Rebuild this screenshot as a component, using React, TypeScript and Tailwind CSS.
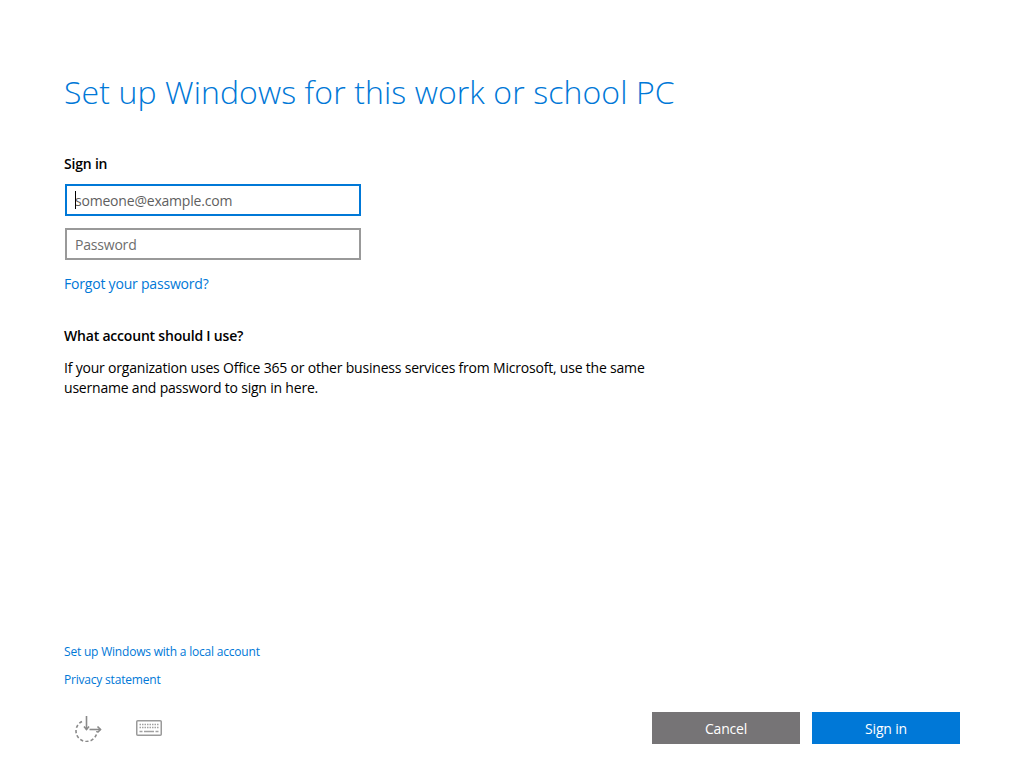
import React from "react"

function AccessIcon() {
  return (
    <svg width="28" height="28" viewBox="0 0 28 28" fill="none" stroke="#8a8a8a" strokeWidth="1.6">
      <path d="M8 7.5A10.5 10.5 0 1 0 23 17" strokeDasharray="3.2 2.2" />
      <path d="M12.5 2v13.5" />
      <path d="M10 12.5l2.5 3 2.5-3" />
      <path d="M15.5 15.5h11" />
      <path d="M23.5 12.5l3 3-3 3" />
    </svg>
  )
}

function KeyboardIcon() {
  return (
    <svg width="26" height="16" viewBox="0 0 26 16" fill="none">
      <rect x="0.75" y="0.75" width="24.5" height="14.5" rx="1" stroke="#9a9a9a" strokeWidth="1.5" />
      <path d="M3.5 4.5h19" stroke="#a0a0a0" strokeWidth="1.5" strokeDasharray="1.5 1" />
      <path d="M3.5 7.5h19" stroke="#a0a0a0" strokeWidth="1.5" strokeDasharray="1.5 1" />
      <path d="M3.5 11.5h3M8 11.5h10M19.5 11.5h3" stroke="#a0a0a0" strokeWidth="1.5" />
    </svg>
  )
}

export default function App() {
  return (
    <div className="w-[1024px] h-[768px] bg-white flex flex-col overflow-hidden font-['Open_Sans','Noto_Sans',sans-serif] text-black">
      <h1 className="ml-16 mt-[70px] h-[44px] text-[32px] leading-[44px] font-light tracking-[0.1px] text-[#0078d7] whitespace-nowrap">
        Set up Windows for this work or school PC
      </h1>

      <div className="ml-16 mt-[40px] w-[640px] flex flex-col">
        <div className="h-5 text-[14px] leading-5 font-semibold tracking-[-0.2px]">Sign in</div>

        <div className="mt-[10px] ml-px relative w-[296px] h-8 border-2 border-[#0078d7] px-[8px] flex items-center text-[14px] text-[#5f5f5f] tracking-[-0.2px]">
          someone@example.com
          <span className="absolute left-[8px] top-[5px] w-px h-[18px] bg-black"></span>
        </div>
        <div className="mt-3 ml-px w-[296px] h-8 border-2 border-[#999999] px-[8px] flex items-center text-[14px] text-[#6d6d6d] tracking-[-0.2px]">
          Password
        </div>

        <a className="mt-[14px] h-5 text-[14px] leading-5 text-[#0078d7] tracking-[-0.2px]">Forgot your password?</a>

        <div className="mt-[32px] h-5 text-[14px] leading-5 font-semibold tracking-[-0.2px]">What account should I use?</div>
        <p className="mt-3 w-[640px] text-[14px] leading-5 tracking-[-0.2px]">
          If your organization uses Office 365 or other business services from Microsoft, use the same
          <br />
          username and password to sign in here.
        </p>
      </div>

      <div className="mt-auto ml-16 flex flex-col items-start gap-[12px] text-[12px] leading-4 text-[#0078d7] tracking-[-0.2px]">
        <a>Set up Windows with a local account</a>
        <a>Privacy statement</a>
      </div>

      <div className="mt-[24px] mb-6 ml-16 mr-16 h-8 flex items-center justify-between">
        <div className="flex items-center gap-[34px] ml-[10px]">
          <AccessIcon />
          <KeyboardIcon />
        </div>
        <div className="flex gap-3">
          <button className="w-[148px] h-8 bg-[#767476] text-white text-[14px] tracking-[-0.2px]">Cancel</button>
          <button className="w-[148px] h-8 bg-[#0078d7] text-white text-[14px] tracking-[-0.2px]">Sign in</button>
        </div>
      </div>
    </div>
  )
}
